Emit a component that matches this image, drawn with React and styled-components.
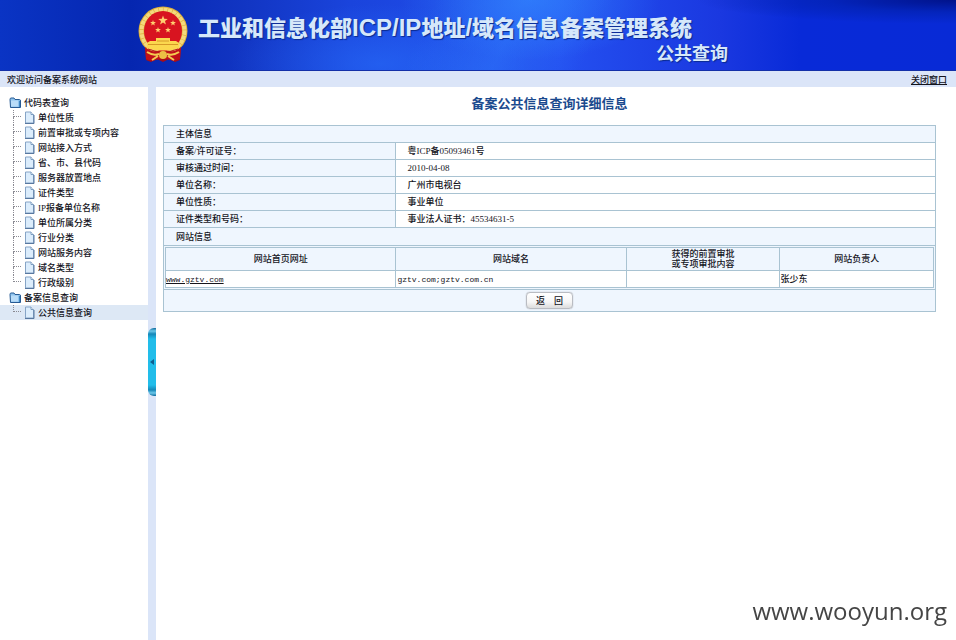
import React from "react";
import styled, { createGlobalStyle } from "styled-components";

const Global = createGlobalStyle`
  *, *::before, *::after { box-sizing: border-box; }
  body {
    margin: 0;
    background: #fff;
    color: #14141c;
    font: 500 9px/12px "Liberation Serif", "Noto Sans CJK SC", sans-serif;
  }
`;

const Page = styled.div`
  display: flex;
  flex-direction: column;
  min-height: 100vh;
`;

const Banner = styled.header`
  display: flex;
  align-items: flex-start;
  gap: 10px;
  height: 71px;
  padding: 6px 0 0 138px;
  border-bottom: 1px solid #1430a8;
  background:
    radial-gradient(ellipse 260px 24px at 100% 0, rgba(0, 16, 130, 0.9), rgba(0, 30, 160, 0.5) 50%, transparent),
    linear-gradient(115deg, transparent 44%, rgba(50, 130, 255, 0.4) 53%, transparent 62%),
    radial-gradient(ellipse 150px 60px at 380px 64px, rgba(40, 110, 250, 0.6), transparent),
    radial-gradient(ellipse 130px 60px at 530px 0, rgba(50, 140, 255, 0.6), transparent),
    linear-gradient(90deg, #0a34c4 0, #0526b0 130px, #1236c4 250px, #1a44dc 350px, #2450f0 560px, #1a38e0 720px, #082ad8 800px, #082ad6 100%);
`;

const Titles = styled.div`
  display: flex;
  flex-direction: column;
  padding-top: 6px;
  color: #d6e8fa;
  text-shadow: 1px 1px 1px #0a2a90;
`;

const Title = styled.h1`
  margin: 0;
  font: 900 22px/29px "Noto Sans CJK SC", sans-serif;
  white-space: nowrap;
`;

const Latin = styled.span`
  font: 700 24px/29px "Liberation Sans", sans-serif;
`;

const Subtitle = styled.p`
  align-self: flex-end;
  margin: 0 -36px 0 0;
  font: 700 18px/20px "Noto Sans CJK SC", sans-serif;
`;

const WelcomeBar = styled.div`
  display: flex;
  justify-content: space-between;
  align-items: center;
  height: 16px;
  padding: 2px 9px 0 7px;
  background: #dbe5f8;
`;

const TextLink = styled.a`
  color: inherit;
  text-decoration: underline;
  text-underline-offset: 1px;
`;

const Body = styled.div`
  display: flex;
  flex: 1;
`;

const Sidebar = styled.nav`
  flex: 0 0 148px;
  padding-top: 8px;
`;

const Tree = styled.ul`
  margin: 0;
  padding: 0;
  list-style: none;
`;

const TreeLink = styled.a`
  display: flex;
  align-items: center;
  height: 15px;
  padding-left: ${(p) => (p.$leaf ? "13px" : "9px")};
  gap: 3px;
  color: inherit;
  text-decoration: none;
  white-space: nowrap;
  background: ${(p) => (p.$active ? "#dde8f5" : "none")};
`;

const Branch = styled.span`
  display: flex;
  flex-direction: column;
  align-self: stretch;
  width: 8px;
  &::before {
    content: "";
    height: 7px;
    border-left: 1px dotted #8a8a92;
    border-bottom: 1px dotted #8a8a92;
  }
  &::after {
    content: "";
    flex: 1;
    border-left: ${(p) => (p.$last ? "0" : "1px dotted #8a8a92")};
  }
`;

const Splitter = styled.div`
  display: flex;
  flex: 0 0 8px;
  align-items: flex-start;
  padding-top: 241px;
  background: #dbe5f8;
`;

const Collapse = styled.button`
  display: flex;
  align-items: center;
  justify-content: center;
  width: 8px;
  height: 68px;
  padding: 0;
  border: 0;
  border-radius: 6px 0 0 6px;
  background: linear-gradient(#0d6a9c 0, #6cc8ea 3px, #1687b8 6px, #22bdea 11px, #22bdea 57px, #1687b8 62px, #6cc8ea 65px, #0d6a9c 68px);
`;

const Main = styled.main`
  flex: 1;
  padding: 8px 20px 40px 7px;
`;

const PageTitle = styled.h2`
  margin: 0 0 14px;
  color: #1b4a8e;
  text-align: center;
  font: 700 13px/16px "Noto Sans CJK SC", sans-serif;
`;

const Grid = styled.table`
  width: 100%;
  border-collapse: collapse;
  table-layout: fixed;
`;

const Cell = styled.td`
  height: ${(p) => p.$height || "17px"};
  padding: ${(p) => p.$padding || "0 12px"};
  border: 1px solid #a9c3d2;
  background: ${(p) => (p.$plain ? "#fff" : "#eff6fe")};
  text-align: ${(p) => p.$align || "left"};
  font-weight: 500;
  line-height: ${(p) => p.$line || "12px"};
`;

const Url = styled.span`
  font-family: "Liberation Mono", monospace;
  font-size: 8px;
`;

const UrlLink = styled(TextLink)`
  font-family: "Liberation Mono", monospace;
  font-size: 8px;
`;

const BackButton = styled.button`
  height: 17px;
  width: 47px;
  padding: 0;
  border: 1px solid #b9bcc2;
  border-radius: 4px;
  background: linear-gradient(#fff, #f6f6f6 60%, #dcdcdc);
  box-shadow: 0 0 1px #999;
  color: inherit;
  font: inherit;
  white-space: pre;
  vertical-align: middle;
`;

const Watermark = styled.div`
  position: fixed;
  right: 9px;
  bottom: 11px;
  color: #454545;
  font: 24px/36px "Open Sans", sans-serif;
`;

const star = (cx, cy, r) =>
  Array.from({ length: 10 }, (_, i) => {
    const a = (i * Math.PI) / 5 - Math.PI / 2;
    const k = i % 2 ? r * 0.42 : r;
    return `${(cx + k * Math.cos(a)).toFixed(1)},${(cy + k * Math.sin(a)).toFixed(1)}`;
  }).join(" ");

function Emblem() {
  return (
    <svg width="50" height="57" viewBox="0 0 50 57" aria-hidden="true">
      <path d="M7 38 H43 L42 54 L37 56 L31 53 L25 56 L19 53 L13 56 L8 54 Z" fill="#a80d18" />
      <circle cx="25" cy="25" r="24.5" fill="#dcae3c" />
      <circle cx="25" cy="25" r="21.500" fill="none" stroke="#f4d97c" strokeWidth="4" strokeDasharray="4 0.6" />
      <ellipse cx="25" cy="25" rx="19" ry="20" fill="#d81420" />
      <g fill="#ffd070">
        <polygon points={star(25, 14.5, 5)} />
        <polygon points={star(15, 17, 3)} />
        <polygon points={star(35, 17, 3)} />
        <polygon points={star(20, 24, 3)} />
        <polygon points={star(30, 24, 3)} />
      </g>
      <path d="M7 41 Q12 46 18 45 H32 Q38 46 43 41 L42 53 L36 55 L25 52 L14 55 L8 53 Z" fill="#c01019" />
      <path d="M18 32 h14 v3 h6 l3 2 v5 Q25 47 9 42 v-5 l3 -2 h6 Z" fill="#fbd74e" />
      <path d="M10 38.500 H40 M19 35 H31" stroke="#d69a28" />
      <path d="M10 43 Q25 49 40 43" fill="none" stroke="#b81a18" />
      <circle cx="25" cy="49" r="4" fill="#ecc044" />
      <path d="M9 46 Q15 50 21 48 M41 46 Q35 50 29 48 M14 54 L20 50 M36 54 L30 50" fill="none" stroke="#f3cb50" strokeWidth="2" />
    </svg>
  );
}

function FolderIcon() {
  return (
    <svg width="12" height="12" viewBox="0 0 12 12" aria-hidden="true">
      <path d="M1 2.500 Q1 1 2 1 H5 L6 2.500 H10.500 Q11.500 2.500 11.500 4 V10.500 H1.500 Z" fill="#8fc4ee" stroke="#265a94" />
      <path d="M2 3.500 H9 V9.500 H2 Z" fill="#b9dcf8" />
      <path d="M10.500 4 V10" stroke="#3f86c4" />
    </svg>
  );
}

function FileIcon() {
  return (
    <svg width="11" height="13" viewBox="0 0 11 13" aria-hidden="true">
      <path d="M1.500 1 H7 L9.500 3.500 V12 H1.500 Z" fill="#dcedfc" stroke="#86a4c6" />
      <path d="M7 1 V3.500 H9.500" fill="#fff" stroke="#7b9cc0" />
      <path d="M1 12.500 H10 V4" fill="none" stroke="#5878a0" />
    </svg>
  );
}

const tree = [
  {
    label: "代码表查询",
    items: [
      "单位性质", "前置审批或专项内容", "网站接入方式", "省、市、县代码", "服务器放置地点", "证件类型",
      "IP报备单位名称", "单位所属分类", "行业分类", "网站服务内容", "域名类型", "行政级别",
    ],
  },
  { label: "备案信息查询", items: ["公共信息查询"] },
];

const details = [
  ["备案/许可证号：", "粤ICP备05093461号"],
  ["审核通过时间：", "2010-04-08"],
  ["单位名称：", "广州市电视台"],
  ["单位性质：", "事业单位"],
  ["证件类型和号码：", "事业法人证书：45534631-5"],
];

function SiteTable() {
  return (
    <Grid>
      <colgroup>
        <col width="30%" />
        <col width="30%" />
        <col width="20%" />
        <col width="20%" />
      </colgroup>
      <thead>
        <tr>
          <Cell as="th" $height="23px" $padding="0" $align="center">网站首页网址</Cell>
          <Cell as="th" $height="23px" $padding="0" $align="center">网站域名</Cell>
          <Cell as="th" $height="23px" $padding="0" $align="center" $line="10px">
            获得的前置审批<br />或专项审批内容
          </Cell>
          <Cell as="th" $height="23px" $padding="0" $align="center">网站负责人</Cell>
        </tr>
      </thead>
      <tbody>
        <tr>
          <Cell $plain $padding="0"><UrlLink href="#site">www.gztv.com</UrlLink></Cell>
          <Cell $plain $padding="0 1px"><Url>gztv.com;gztv.com.cn</Url></Cell>
          <Cell $plain $padding="0" />
          <Cell $plain $padding="0">张少东</Cell>
        </tr>
      </tbody>
    </Grid>
  );
}

export default function App() {
  return (
    <Page>
      <Global />
      <Banner>
        <Emblem />
        <Titles>
          <Title>工业和信息化部<Latin>ICP/IP</Latin>地址<Latin>/</Latin>域名信息备案管理系统</Title>
          <Subtitle>公共查询</Subtitle>
        </Titles>
      </Banner>
      <WelcomeBar>
        <span>欢迎访问备案系统网站</span>
        <TextLink href="#close">关闭窗口</TextLink>
      </WelcomeBar>
      <Body>
        <Sidebar>
          <Tree>
            {tree.map((group) => (
              <li key={group.label}>
                <TreeLink href="#group"><FolderIcon />{group.label}</TreeLink>
                <Tree>
                  {group.items.map((item, i) => (
                    <li key={item}>
                      <TreeLink href="#item" $leaf $active={item === "公共信息查询"}>
                        <Branch $last={i === group.items.length - 1} />
                        <FileIcon />
                        {item}
                      </TreeLink>
                    </li>
                  ))}
                </Tree>
              </li>
            ))}
          </Tree>
        </Sidebar>
        <Splitter>
          <Collapse aria-label="收起">
            <svg width="4" height="6" viewBox="0 0 4 6" aria-hidden="true">
              <path d="M4 0 L0 3 L4 6 Z" fill="#0d5f90" />
            </svg>
          </Collapse>
        </Splitter>
        <Main>
          <PageTitle>备案公共信息查询详细信息</PageTitle>
          <Grid>
            <colgroup>
              <col width="30%" />
              <col width="70%" />
            </colgroup>
            <tbody>
              <tr><Cell as="th" colSpan={2}>主体信息</Cell></tr>
              {details.map(([name, value]) => (
                <tr key={name}>
                  <Cell as="th">{name}</Cell>
                  <Cell $plain>{value}</Cell>
                </tr>
              ))}
              <tr><Cell as="th" colSpan={2} $height="18px">网站信息</Cell></tr>
              <tr><Cell colSpan={2} $padding="1px"><SiteTable /></Cell></tr>
              <tr>
                <Cell colSpan={2} $height="22px" $padding="0" $align="center">
                  <BackButton type="button">返　回</BackButton>
                </Cell>
              </tr>
            </tbody>
          </Grid>
        </Main>
      </Body>
      <Watermark>www.wooyun.org</Watermark>
    </Page>
  );
}
